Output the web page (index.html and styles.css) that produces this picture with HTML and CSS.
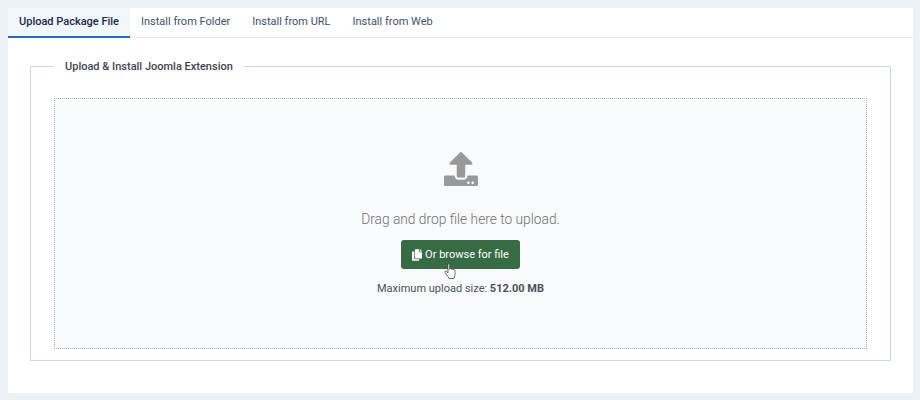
FILE: index.html
```html
<!DOCTYPE html>
<html lang="en">
<head>
    <meta charset="UTF-8">
    <meta name="viewport" content="width=device-width, initial-scale=1.0">
    <title>Extensions: Install</title>
    <link rel="stylesheet" href="styles.css">
</head>
<body>

    <div class="card">
        <div class="tabs">
            <a href="#" class="tab active">Upload Package File</a>
            <a href="#" class="tab">Install from Folder</a>
            <a href="#" class="tab">Install from URL</a>
            <a href="#" class="tab">Install from Web</a>
        </div>

        <div class="tab-body">
            <fieldset class="upload-box">
                <legend>Upload &amp; Install Joomla Extension</legend>

                <div class="dropzone">
                    <svg class="upload-icon" viewBox="0 0 512 512" aria-hidden="true">
                        <path d="M296 384h-80c-13.3 0-24-10.7-24-24V192h-87.7c-17.8 0-26.7-21.5-14.1-34.1L242.3 5.7c7.5-7.5 19.8-7.5 27.3 0l152.2 152.2c12.6 12.6 3.7 34.1-14.1 34.1H320v168c0 13.3-10.7 24-24 24zm216-8v112c0 13.3-10.7 24-24 24H24c-13.3 0-24-10.7-24-24V376c0-13.3 10.7-24 24-24h136v8c0 30.9 25.1 56 56 56h80c30.9 0 56-25.1 56-56v-8h136c13.3 0 24 10.7 24 24zm-124 88c0-11-9-20-20-20s-20 9-20 20 9 20 20 20 20-9 20-20zm64 0c0-11-9-20-20-20s-20 9-20 20 9 20 20 20 20-9 20-20z"/>
                    </svg>
                    <p class="drop-text">Drag and drop file here to upload.</p>
                    <div class="btn-wrap">
                        <button class="btn" type="button">
                            <svg class="copy-icon" viewBox="0 0 448 512" aria-hidden="true">
                                <path d="M320 448v40c0 13.255-10.745 24-24 24H24c-13.255 0-24-10.745-24-24V120c0-13.255 10.745-24 24-24h72v296c0 30.879 25.121 56 56 56h168zm0-344V0H152c-13.255 0-24 10.745-24 24v368c0 13.255 10.745 24 24 24h272c13.255 0 24-10.745 24-24V128H344c-13.2 0-24-10.8-24-24zm120.971-31.029L375.029 7.029A24 24 0 0 0 358.059 0H352v96h96v-6.059a24 24 0 0 0-7.029-16.97z"/>
                            </svg>
                            Or browse for file
                        </button>
                        <!-- mouse pointer caught in the shot -->
                        <svg class="pointer" viewBox="0 0 16 20" aria-hidden="true">
                            <path d="M4.5 1.6c0-1.2 2-1.2 2 0V7l.3-1c1.4-.4 1.8.2 1.8 1 .5-.8 1.8-.6 1.9.4.6-.6 1.9-.3 2 .7.1 2 .4 4.200-.3 6.200-.3 1-.8 1.700-.8 3.200H5.700c-.3-1.500-1.500-2.500-2.500-4L1.100 10.500c-.6-1 .5-2 1.500-1.300L4.500 11z" fill="#fff" stroke="#444" stroke-width="0.9" stroke-linejoin="round"/>
                        </svg>
                    </div>
                    <p class="max-size">Maximum upload size: <strong>512.00 MB</strong></p>
                </div>
            </fieldset>
        </div>
    </div>

</body>
</html>
```

FILE: styles.css
```css
html, body {
    height: 100%;
}
body {
    margin: 0;
    padding: 8px 7px 7px 8px;
    box-sizing: border-box;
    font-family: Roboto, Arial, sans-serif;
    background-color: #ecf1f6;
}
.card {
    height: 100%;
    background: #fff;
    border-radius: 2px;
    box-sizing: border-box;
}
.tabs {
    display: flex;
    height: 30px;
    box-sizing: border-box;
    border-bottom: 1px solid #e6ebf3;
}
.tab {
    height: 30px;
    box-sizing: border-box;
    padding: 0 11px;
    line-height: 27px;
    font-size: 11px;
    color: #3f5068;
    text-decoration: none;
}
.tab.active {
    font-weight: 500;
    color: #16294a;
    background-color: #f1f6fb;
    border-bottom: 2px solid #2a69b8;
}
.tab-body {
    padding: 20px 22px 0;
}
.upload-box {
    margin: 0;
    padding: 24px 23px 11px;
    min-width: 0;
    border: 1px solid #c9d9ea;
}
.upload-box legend {
    padding: 2px 11px 0;
    font-size: 11px;
    font-weight: 500;
    line-height: 14px;
    color: #3f4450;
}
.dropzone {
    display: flex;
    flex-direction: column;
    align-items: center;
    height: 251px;
    box-sizing: border-box;
    padding-top: 53px;
    background-color: #f9fafc;
    border: 1px dotted #b0b0b0;
}
.upload-icon {
    width: 34px;
    height: 34px;
    fill: #999;
}
.drop-text {
    margin: 23px 0 0;
    font-size: 13.75px;
    font-weight: 300;
    line-height: 20px;
    color: #707070;
}
.btn-wrap {
    position: relative;
    margin-top: 11px;
}
.btn {
    display: flex;
    align-items: center;
    justify-content: center;
    gap: 3px;
    width: 119px;
    height: 29px;
    padding: 0;
    border: 0;
    border-radius: 3px;
    background-color: #376b43;
    color: #fff;
    font-family: inherit;
    font-size: 11px;
    font-weight: 400;
}
.copy-icon {
    width: 10px;
    height: 12px;
    fill: #fff;
}
.pointer {
    position: absolute;
    left: 43px;
    top: 23px;
    width: 14px;
    height: 18px;
}
.max-size {
    margin: 13px 0 0;
    font-size: 11px;
    line-height: 14px;
    color: #4a4f5a;
}
.max-size strong {
    font-weight: 700;
}
```
